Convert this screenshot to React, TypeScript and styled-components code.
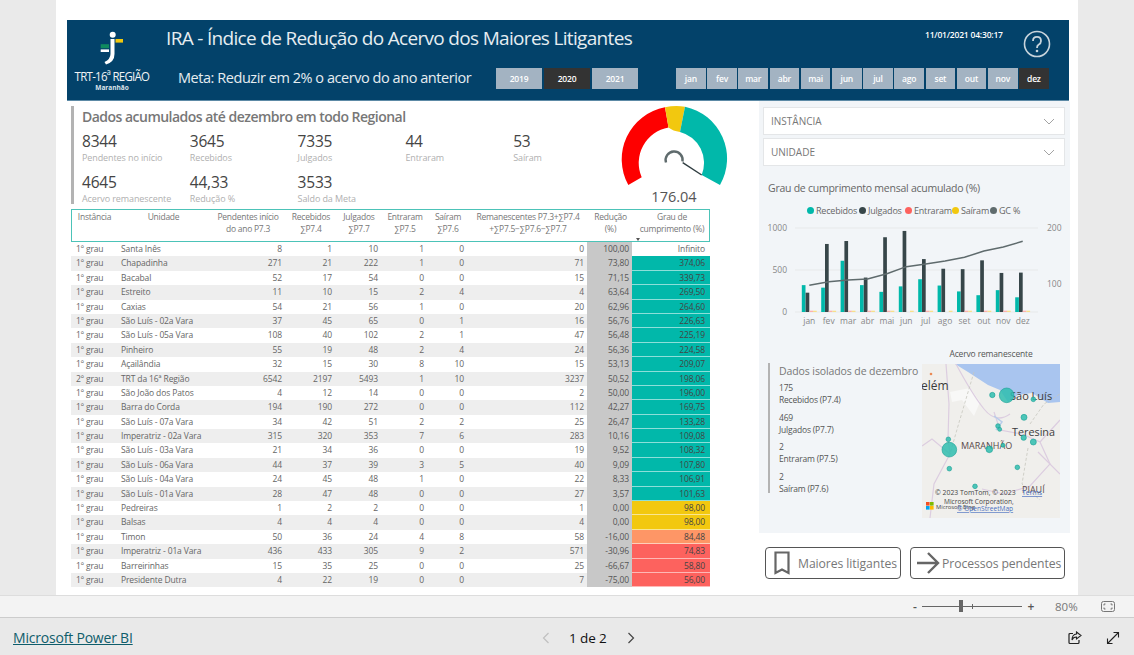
import React from "react";
import styled, { createGlobalStyle } from "styled-components";

const FONT = `"Open Sans", "Noto Sans", "Liberation Sans", sans-serif`;

const Global = createGlobalStyle`
  html, body { margin: 0; padding: 0; background: #eaeaea; font-family: ${FONT}; overflow: hidden; }
  * { box-sizing: border-box; }
`;

const Page = styled.div`
  width: 1134px; height: 655px; display: flex; flex-direction: column; background: #eaeaea;
`;
const Stage = styled.div`
  height: 595px; padding-left: 56px; display: flex; flex: none;
`;
const Canvas = styled.main`
  width: 1022px; background: #fff; padding: 20px 8px 0 11px; display: flex; flex-direction: column;
`;
const Banner = styled.header`
  width: 1002px; height: 81px; flex: none; background: #03426a; border-bottom: 1px solid #5d8aa6;
  display: flex; color: #fff;
`;
const LogoBox = styled.div`
  width: 99px; flex: none; display: flex; flex-direction: column; align-items: center; padding: 9px 9px 0 0;
`;
const LogoName = styled.div`
  font-size: 13.5px; line-height: 14px; letter-spacing: -0.85px; color: #f1f4f6; margin-top: 4px; white-space: nowrap; transform: scaleX(.85);
`;
const LogoSub = styled.div`
  font-size: 6.5px; line-height: 8px; font-weight: 700; color: #dde5ea; margin-top: 1px;
`;
const BannerMain = styled.div`
  flex: 1; display: flex; flex-direction: column; min-width: 0;
`;
const TitleRow = styled.div`
  height: 48px; display: flex; align-items: flex-start;
`;
const Title = styled.h1`
  margin: 6px 0 0; font-size: 19px; line-height: 25px; font-weight: 400; color: #e6edf1; width: 759px; white-space: nowrap; letter-spacing: -0.68px;
`;
const Stamp = styled.div`
  font-size: 8.5px; line-height: 12px; margin-top: 9px; width: 98px; color: #fff; font-weight: 600; white-space: nowrap; letter-spacing: -0.2px;
`;
const HelpIcon = styled.svg`
  width: 28px; height: 28px; margin-top: 10px; flex: none;
`;
const MetaRow = styled.div`
  display: flex; align-items: flex-start; height: 21px;
`;
const Meta = styled.div`
  width: 330px; padding-left: 12px; font-size: 14.5px; line-height: 20px; color: #e6edf1; white-space: nowrap; letter-spacing: -0.45px; flex: none;
`;
const Years = styled.div`
  display: flex; gap: 2px; width: 180px; flex: none;
`;
const Months = styled.div`
  display: flex; gap: 1.5px; flex: none;
`;
const Chip = styled.div<{ $on?: boolean; $w: number }>`
  width: ${(p) => p.$w}px; height: 21px; display: flex; align-items: center; justify-content: center;
  background: ${(p) => (p.$on ? "#333" : "#a3b3c2")}; color: #fff; font-size: 8.5px; font-weight: 600; letter-spacing: -0.2px;
`;

const Body = styled.div`
  display: flex; flex: 1; min-height: 0;
`;
const LeftCol = styled.div`
  width: 692px; flex: none; padding-left: 4px; display: flex; flex-direction: column;
`;
const TopRow = styled.div`
  height: 108px; display: flex; flex: none;
`;
const Summary = styled.section`
  width: 539px; height: 98px; margin-top: 5px; border-left: 3px solid #b3b3b3; padding-left: 8px; flex: none;
`;
const SummaryTitle = styled.h2`
  margin: 1px 0 0; font-size: 14px; line-height: 20px; font-weight: 600; color: #777; white-space: nowrap; letter-spacing: -0.52px;
`;
const KpiGrid = styled.div`
  display: grid; grid-template-columns: repeat(5, 107.8px); grid-auto-rows: 40.5px; margin-top: 4px;
`;
const Kpi = styled.div`
  display: flex; flex-direction: column;
`;
const KpiValue = styled.div`
  font-size: 15.5px; line-height: 21px; color: #444; letter-spacing: -0.2px;
`;
const KpiLabel = styled.div`
  font-size: 9px; line-height: 12px; color: #b0b0b0; white-space: nowrap; letter-spacing: -0.1px;
`;
const GaugeBox = styled.div`
  width: 130px; flex: none; display: flex; flex-direction: column; align-items: center; margin-top: -1px;
`;
const GaugeValue = styled.div`
  font-size: 14.5px; line-height: 18px; color: #555; margin-left: -2px;
`;

const Table = styled.div`
  width: 639px; flex: none;
`;
const COLS = "45px 93px 76px 50px 46px 46px 40px 120px 45px 78px";
const HeadRow = styled.div`
  display: grid; grid-template-columns: ${COLS}; height: 33px;
  border: 1px solid #4cc3b8; color: #777; font-size: 8.5px; line-height: 12px; text-align: center; letter-spacing: -0.25px;
`;
const HeadCell = styled.div`
  padding-top: 1px; position: relative; white-space: nowrap;
`;
const SortMark = styled.span`
  position: absolute; left: 3px; bottom: 0; width: 0; height: 0;
  border-left: 2.5px solid transparent; border-right: 2.5px solid transparent; border-top: 3px solid #555;
`;
const Row = styled.div<{ $alt: boolean }>`
  display: grid; grid-template-columns: ${COLS}; height: 14.4px; background: ${(p) => (p.$alt ? "#eee" : "#fff")};
  font-size: 8.5px; line-height: 14.4px; color: #666; letter-spacing: -0.12px;
`;
const Text = styled.div<{ $pad?: number }>`
  padding-left: ${(p) => p.$pad ?? 0}px; white-space: nowrap;
`;
const Num = styled.div`
  text-align: right; padding-right: 3px;
`;
const Reduc = styled(Num)`
  background: #c8c8c8; padding-right: 3px; color: #555;
`;
const Grade = styled(Num)<{ $bg: string; $fill: boolean }>`
  background: ${(p) => p.$bg}; padding-right: 5px; color: ${(p) => (p.$fill ? "#444" : "#666")};
  box-shadow: ${(p) => (p.$fill ? "inset 0 -1px 0 rgba(255,255,255,.55)" : "none")};
`;

const RightCol = styled.div`
  width: 311px; flex: none; display: flex; flex-direction: column;
`;
const Panel = styled.aside`
  height: 432px; background: #f2f5f8; padding: 6px 0 0 4px; flex: none;
`;
const Slicer = styled.div`
  width: 302px; height: 28px; background: #fff; border: 1px solid #e4e6e8; margin-bottom: 3px;
  display: flex; align-items: center; justify-content: space-between; padding: 0 9px 0 7px;
  font-size: 10px; color: #777;
`;
const ChartTitle = styled.div`
  margin: 15px 0 0 5px; font-size: 10.5px; line-height: 14px; color: #666; letter-spacing: -0.25px; white-space: nowrap;
`;
const Legend = styled.div`
  display: flex; margin: 9px 0 0 43.5px; height: 12px; align-items: center;
`;
const LegendItem = styled.div<{ $c: string; $w: number }>`
  width: ${(p) => p.$w}px; display: flex; align-items: center; gap: 2.5px; font-size: 9px; color: #666; flex: none; letter-spacing: -0.2px; white-space: nowrap;
  &::before { content: ""; width: 7px; height: 7px; border-radius: 50%; background: ${(p) => p.$c}; flex: none; }
`;
const Chart = styled.svg`
  display: block; width: 300px; height: 108px; margin: 6px 0 0 2px;
`;
const Lower = styled.div`
  display: flex; margin: 18px 0 0 5px;
`;
const Isolated = styled.section`
  width: 154px; height: 130px; margin-top: 15px; border-left: 2px solid #b3b3b3; padding: 1px 0 0 9px; flex: none;
`;
const IsoTitle = styled.div`
  font-size: 10.5px; line-height: 14px; color: #777; white-space: nowrap; letter-spacing: -0.1px; margin-bottom: 4px;
`;
const IsoItem = styled.div`
  height: 29.6px; font-size: 8.5px; line-height: 12px; color: #555; letter-spacing: -0.2px;
`;
const MapCol = styled.div`
  width: 138px; flex: none; display: flex; flex-direction: column;
`;
const MapTitle = styled.div`
  height: 16px; font-size: 8.5px; line-height: 12px; text-align: center; color: #555; white-space: nowrap; letter-spacing: -0.15px;
`;
const MapSvg = styled.svg`
  display: block; width: 138px; height: 154px;
`;
const Buttons = styled.div`
  display: flex; gap: 9px; padding: 14px 0 0 6px;
`;
const NavButton = styled.div<{ $w: number }>`
  width: ${(p) => p.$w}px; height: 32px; border: 1px solid #555; border-radius: 4px; background: #fff;
  display: flex; align-items: center; font-size: 12.2px; color: #777; white-space: nowrap; letter-spacing: -0.08px;
`;
const Status = styled.div`
  height: 23px; flex: none; background: #f3f3f3; border-top: 1px solid #ddd; border-bottom: 1px solid #ccc;
  display: flex; align-items: center; padding-left: 910px; color: #666;
`;
const ZoomSign = styled.span`
  font-size: 12px; width: 10px; text-align: center; color: #555; font-weight: 600;
`;
const Track = styled.div`
  width: 100px; height: 1px; background: #666; margin: 0 4px 0 2px; position: relative;
`;
const Thumb = styled.span`
  position: absolute; left: 37px; top: -6px; width: 4px; height: 12px; background: #666;
`;
const Tick = styled.span`
  position: absolute; left: 50px; top: -2px; width: 1px; height: 5px; background: #666;
`;
const ZoomValue = styled.span`
  font-size: 11.5px; margin-left: 19px; width: 46px; color: #777;
`;
const FitIcon = styled.svg`
  width: 14px; height: 11px;
`;
const Footer = styled.footer`
  height: 37px; flex: none; display: flex; align-items: center; background: #e9e9e9; padding: 3px 0 0 13px;
`;
const BiLink = styled.a`
  font-size: 14px; color: #0f5d6b; text-decoration: underline; width: 529px; letter-spacing: -0.2px; flex: none; white-space: nowrap; line-height: 18px;
`;
const Pager = styled.div`
  display: flex; align-items: center; width: 526px; flex: none; font-size: 13.5px; color: #111; letter-spacing: -0.1px;
`;
const PageLabel = styled.span`
  width: 37px; margin: 0 21px 0 19px; white-space: nowrap;
`;
const FootIcons = styled.div`
  display: flex; gap: 24px; align-items: center;
`;

type R = [string, string, number, number, number, number, number, number, string, string];
const rows: R[] = [
  ["1º grau", "Santa Inês", 8, 1, 10, 1, 0, 0, "100,00", "Infinito"],
  ["1º grau", "Chapadinha", 271, 21, 222, 1, 0, 71, "73,80", "374,06"],
  ["1º grau", "Bacabal", 52, 17, 54, 0, 0, 15, "71,15", "339,73"],
  ["1º grau", "Estreito", 11, 10, 15, 2, 4, 4, "63,64", "269,50"],
  ["1º grau", "Caxias", 54, 21, 56, 1, 0, 20, "62,96", "264,60"],
  ["1º grau", "São Luís - 02a Vara", 37, 45, 65, 0, 1, 16, "56,76", "226,63"],
  ["1º grau", "São Luís - 05a Vara", 108, 40, 102, 2, 1, 47, "56,48", "225,19"],
  ["1º grau", "Pinheiro", 55, 19, 48, 2, 4, 24, "56,36", "224,58"],
  ["1º grau", "Açailândia", 32, 15, 30, 8, 10, 15, "53,13", "209,07"],
  ["2º grau", "TRT da 16ª Região", 6542, 2197, 5493, 1, 10, 3237, "50,52", "198,06"],
  ["1º grau", "São João dos Patos", 4, 12, 14, 0, 0, 2, "50,00", "196,00"],
  ["1º grau", "Barra do Corda", 194, 190, 272, 0, 0, 112, "42,27", "169,75"],
  ["1º grau", "São Luís - 07a Vara", 34, 42, 51, 2, 2, 25, "26,47", "133,28"],
  ["1º grau", "Imperatriz - 02a Vara", 315, 320, 353, 7, 6, 283, "10,16", "109,08"],
  ["1º grau", "São Luís - 03a Vara", 21, 34, 36, 0, 0, 19, "9,52", "108,32"],
  ["1º grau", "São Luís - 06a Vara", 44, 37, 39, 3, 5, 40, "9,09", "107,80"],
  ["1º grau", "São Luís - 04a Vara", 24, 45, 48, 1, 0, 22, "8,33", "106,91"],
  ["1º grau", "São Luís - 01a Vara", 28, 47, 48, 0, 0, 27, "3,57", "101,63"],
  ["1º grau", "Pedreiras", 1, 2, 2, 0, 0, 1, "0,00", "98,00"],
  ["1º grau", "Balsas", 4, 4, 4, 0, 0, 4, "0,00", "98,00"],
  ["1º grau", "Timon", 50, 36, 24, 4, 8, 58, "-16,00", "84,48"],
  ["1º grau", "Imperatriz - 01a Vara", 436, 433, 305, 9, 2, 571, "-30,96", "74,83"],
  ["1º grau", "Barreirinhas", 15, 35, 25, 0, 0, 25, "-66,67", "58,80"],
  ["1º grau", "Presidente Dutra", 4, 22, 19, 0, 0, 7, "-75,00", "56,00"],
];
const gradeColor = (s: string) => {
  if (s === "Infinito") return "transparent";
  const v = parseFloat(s.replace(",", "."));
  if (v >= 100) return "#01b8aa";
  if (v >= 90) return "#f2c80f";
  if (v >= 80) return "#fe9666";
  return "#fd625e";
};

const months = ["jan", "fev", "mar", "abr", "mai", "jun", "jul", "ago", "set", "out", "nov", "dez"];
const rec = [320, 290, 610, 320, 240, 305, 390, 315, 245, 200, 260, 175];
const jul = [230, 810, 845, 410, 890, 965, 630, 515, 510, 615, 465, 469];
const lineY = [331, 320, 315, 312, 296, 275, 267, 258, 247, 228, 216, 199];

const kpis = [
  ["8344", "Pendentes no início"], ["3645", "Recebidos"], ["7335", "Julgados"], ["44", "Entraram"], ["53", "Saíram"],
  ["4645", "Acervo remanescente"], ["44,33", "Redução %"], ["3533", "Saldo da Meta"],
];
const bubbles = [
  [755, 151, 22], [712, 150, 8], [835, 163, 7], [807, 217, 9], [729, 243, 7], [734, 253, 6], [806, 278, 8],
  [835, 291, 9], [744, 301, 6], [703, 313, 10], [580, 283, 7], [583, 314, 22], [583, 371, 7], [787, 367, 7], [660, 424, 7],
];

const Gauge = () => (
  <svg width="130" height="88" viewBox="0 0 130 88" style={{ display: "block", flex: "none" }}>
    <path d="M18.3 85A53 53 0 0 1 55 7.3L58.5 27.5A36 36 0 0 0 31.7 77.3Z" fill="#fe0000" />
    <path d="M55 7.3A53 53 0 0 1 75 6.7L70 32Q63 31 58.5 27.5Z" fill="#f2c80f" />
    <path d="M75 6.7A53 53 0 0 1 110 85L91.7 75A32 32 0 0 0 70 32Z" fill="#01b8aa" />
    <path d="M56 62.5A8.5 8.5 0 1 1 72.5 61.5" fill="none" stroke="#5f6b6d" strokeWidth="2.4" />
    <path d="M72.7 62.7L91.7 75" stroke="#2f3d40" strokeWidth="1.4" />
  </svg>
);

const Logo = () => (
  <svg width="30" height="36" viewBox="0 0 30 36">
    <circle cx="15.7" cy="5.7" r="3" fill="#fff" />
    <rect x="18.5" y="10" width="7.5" height="3.6" fill="#f2c80f" />
    <rect x="3.7" y="15.2" width="8.3" height="4" fill="#0f8a5f" />
    <rect x="3.7" y="20.4" width="8.3" height="2.6" fill="#fff" />
    <path d="M13.5 10H17.5V25Q17.5 33 9 35.5L7.5 33Q13.5 30 13.5 25Z" fill="#fff" />
  </svg>
);

const BarChart = () => (
  <Chart viewBox="0 0 300 108">
    {[6, 48, 90].map((y) => (
      <line key={y} x1="30" x2="273" y1={y} y2={y} stroke="#e7e9ea" strokeWidth="1" />
    ))}
    {([["1000", 6], ["500", 48], ["0", 90]] as [string, number][]).map(([t, y]) => (
      <text key={t} x="22" y={y + 3} textAnchor="end" fontSize="8.5" fill="#888" fontFamily={FONT}>{t}</text>
    ))}
    {([["200", 6], ["100", 62]] as [string, number][]).map(([t, y]) => (
      <text key={t} x="282" y={y + 3} fontSize="8.5" fill="#888" fontFamily={FONT}>{t}</text>
    ))}
    {months.map((m, i) => {
      const c = 44.3 + 19.4 * i;
      return (
        <g key={m}>
          <rect x={c - 7.5} y={90 - rec[i] * 0.084} width="3.7" height={rec[i] * 0.084} fill="#01b8aa" />
          <rect x={c - 3.7} y={90 - jul[i] * 0.084} width="3.7" height={jul[i] * 0.084} fill="#374649" />
          {i !== 5 && i !== 7 && <rect x={c} y="88.7" width="3.7" height="1.3" fill="#fdb0ae" />}
          <rect x={c + 3.7} y="88.7" width="3.7" height="1.3" fill="#f8e08a" />
          <text x={c} y="101.5" textAnchor="middle" fontSize="8.5" fill="#888" fontFamily={FONT}>{m}</text>
        </g>
      );
    })}
    <polyline
      points={lineY.map((y, i) => `${44.3 + 19.4 * i},${y / 3 - 47}`).join(" ")}
      fill="none" stroke="#5f6b6d" strokeWidth="1.5"
    />
  </Chart>
);

const MapView = () => (
  <MapSvg viewBox="0 0 138 154">
    <rect width="138" height="154" fill="#f0efec" />
    <path d="M33 0L46 8L66 21L78 26L86 38L96 31L110 29L126 39L138 38V0Z" fill="#a9c5ef" />
    <path d="M28 28L48 24L58 38L52 52L40 36L30 38Z" fill="#f8f8f7" />
    <g fill="none" stroke="#dccde0" strokeWidth="1.2">
      <path d="M24 0L27 40L26 75L28 90L12 120L8 154" />
      <path d="M34 0Q50 30 62 45T88 50" />
      <path d="M72 48L78 66L100 70L118 78L128 100L108 122L82 130L60 125" />
      <path d="M118 78L138 56" />
      <path d="M28 90L10 75L0 82" />
      <path d="M116 88L138 110" />
    </g>
    <g fill="none" stroke="#c6c6be" strokeWidth=".8" strokeDasharray="3 2">
      <path d="M52 8L36 62L28 90" />
      <path d="M108 60L122 40L138 30" />
      <path d="M106 84L100 120L118 136" />
    </g>
    <path d="M72 52L80 58L74 66" fill="none" stroke="#b9cdea" strokeWidth="1.5" />
    <circle cx="9" cy="10" r="1.3" fill="#ea8a55" />
    <g fontFamily={FONT} fill="#3b3b3b">
      <text x="-1" y="26" fontSize="12">elém</text>
      <text x="88" y="36" fontSize="11">São Luís</text>
      <text x="90" y="72" fontSize="10.8">Teresina</text>
      <text x="39" y="85" fontSize="9" fill="#5a4a4a">MARANHÃO</text>
      <text x="100" y="129" fontSize="9" fill="#5a4a4a">PIAUÍ</text>
    </g>
    {bubbles.map(([x, y, r], i) => (
      <circle key={i} cx={(x - 501) / 3} cy={(y - 57) / 3} r={r / 3} fill="#2fbdaf" fillOpacity=".85" stroke="#18a093" strokeWidth=".6" />
    ))}
    <g fontFamily={FONT} fontSize="6.9" fill="#444">
      <text x="13" y="131">© 2023 TomTom, © 2023</text>
      <text x="22" y="139.5" fontSize="6.6">Microsoft Corporation,</text>
      <text x="14" y="144.5" fontSize="5.8">Microsoft Bing</text>
      <text x="35" y="147" fontSize="6.6" fill="#4a6fc0" textDecoration="underline">© OpenStreetMap</text>
      <text x="100" y="131" fill="#4a6fc0" textDecoration="underline">Terms</text>
    </g>
    <rect x="4" y="138" width="3.6" height="3.6" fill="#f25022" />
    <rect x="8" y="138" width="3.6" height="3.6" fill="#7fba00" />
    <rect x="4" y="142" width="3.6" height="3.6" fill="#00a4ef" />
    <rect x="8" y="142" width="3.6" height="3.6" fill="#ffb900" />
  </MapSvg>
);

const Chevron = () => (
  <svg width="12" height="7" viewBox="0 0 12 7">
    <path d="M1 1L6 6L11 1" fill="none" stroke="#999" strokeWidth=".9" />
  </svg>
);

export default function App() {
  return (
    <Page>
      <Global />
      <Stage>
        <Canvas>
          <Banner>
            <LogoBox>
              <Logo />
              <LogoName>TRT-16ª REGIÃO</LogoName>
              <LogoSub>Maranhão</LogoSub>
            </LogoBox>
            <BannerMain>
              <TitleRow>
                <Title>IRA - Índice de Redução do Acervo dos Maiores Litigantes</Title>
                <Stamp>11/01/2021 04:30:17</Stamp>
                <HelpIcon viewBox="0 0 28 28">
                  <circle cx="14" cy="14" r="12.5" fill="none" stroke="#c8d4dc" strokeWidth="1.6" />
                  <path d="M10 11Q10 6.8 14 6.8T18 11Q18 13.3 15.5 14.8Q14 15.8 14 18" fill="none" stroke="#c8d4dc" strokeWidth="1.8" />
                  <circle cx="14" cy="21" r="1.3" fill="#c8d4dc" />
                </HelpIcon>
              </TitleRow>
              <MetaRow>
                <Meta>Meta: Reduzir em 2% o acervo do ano anterior</Meta>
                <Years>
                  {["2019", "2020", "2021"].map((y) => (
                    <Chip key={y} $w={46} $on={y === "2020"}>{y}</Chip>
                  ))}
                </Years>
                <Months>
                  {months.map((m) => (
                    <Chip key={m} $w={29.7} $on={m === "dez"}>{m}</Chip>
                  ))}
                </Months>
              </MetaRow>
            </BannerMain>
          </Banner>
          <Body>
            <LeftCol>
              <TopRow>
                <Summary>
                  <SummaryTitle>Dados acumulados até dezembro em todo Regional</SummaryTitle>
                  <KpiGrid>
                    {kpis.map(([v, l]) => (
                      <Kpi key={l}>
                        <KpiValue>{v}</KpiValue>
                        <KpiLabel>{l}</KpiLabel>
                      </Kpi>
                    ))}
                  </KpiGrid>
                </Summary>
                <GaugeBox>
                  <Gauge />
                  <GaugeValue>176.04</GaugeValue>
                </GaugeBox>
              </TopRow>
              <Table>
                <HeadRow>
                  <HeadCell>Instância</HeadCell>
                  <HeadCell>Unidade</HeadCell>
                  <HeadCell>Pendentes início<br />do ano P7.3</HeadCell>
                  <HeadCell>Recebidos<br />∑P7.4</HeadCell>
                  <HeadCell>Julgados<br />∑P7.7</HeadCell>
                  <HeadCell>Entraram<br />∑P7.5</HeadCell>
                  <HeadCell>Saíram<br />∑P7.6</HeadCell>
                  <HeadCell>Remanescentes P7.3+∑P7.4<br />+∑P7.5−∑P7.6−∑P7.7</HeadCell>
                  <HeadCell>Redução<br />(%)</HeadCell>
                  <HeadCell>Grau de<br />cumprimento (%)<SortMark /></HeadCell>
                </HeadRow>
                {rows.map((r, i) => (
                  <Row key={r[1]} $alt={i % 2 === 1}>
                    <Text $pad={5}>{r[0]}</Text>
                    <Text $pad={5}>{r[1]}</Text>
                    <Num>{r[2]}</Num>
                    <Num>{r[3]}</Num>
                    <Num>{r[4]}</Num>
                    <Num>{r[5]}</Num>
                    <Num>{r[6]}</Num>
                    <Num>{r[7]}</Num>
                    <Reduc>{r[8]}</Reduc>
                    <Grade $bg={gradeColor(r[9])} $fill={r[9] !== "Infinito"}>{r[9]}</Grade>
                  </Row>
                ))}
              </Table>
            </LeftCol>
            <RightCol>
              <Panel>
                <Slicer>INSTÂNCIA<Chevron /></Slicer>
                <Slicer>UNIDADE<Chevron /></Slicer>
                <ChartTitle>Grau de cumprimento mensal acumulado (%)</ChartTitle>
                <Legend>
                  <LegendItem $c="#01b8aa" $w={52}>Recebidos</LegendItem>
                  <LegendItem $c="#374649" $w={46}>Julgados</LegendItem>
                  <LegendItem $c="#fd625e" $w={47}>Entraram</LegendItem>
                  <LegendItem $c="#f2c80f" $w={38}>Saíram</LegendItem>
                  <LegendItem $c="#5f6b6d" $w={40}>GC %</LegendItem>
                </Legend>
                <BarChart />
                <Lower>
                  <Isolated>
                    <IsoTitle>Dados isolados de dezembro</IsoTitle>
                    <IsoItem>175<br />Recebidos (P7.4)</IsoItem>
                    <IsoItem>469<br />Julgados (P7.7)</IsoItem>
                    <IsoItem>2<br />Entraram (P7.5)</IsoItem>
                    <IsoItem>2<br />Saíram (P7.6)</IsoItem>
                  </Isolated>
                  <MapCol>
                    <MapTitle>Acervo remanescente</MapTitle>
                    <MapView />
                  </MapCol>
                </Lower>
              </Panel>
              <Buttons>
                <NavButton $w={136}>
                  <svg width="32" height="28" viewBox="0 0 32 28" style={{ flex: "none" }}>
                    <path d="M9.5 3.5H22.5V24L16 20.5L9.5 24Z" fill="none" stroke="#666" strokeWidth="2.2" />
                  </svg>
                  Maiores litigantes
                </NavButton>
                <NavButton $w={155}>
                  <svg width="31" height="28" viewBox="0 0 31 28" style={{ flex: "none" }}>
                    <path d="M6 14H27M17 4L27 14L17 24" fill="none" stroke="#666" strokeWidth="2.4" />
                  </svg>
                  Processos pendentes
                </NavButton>
              </Buttons>
            </RightCol>
          </Body>
        </Canvas>
      </Stage>
      <Status>
        <ZoomSign>-</ZoomSign>
        <Track><Thumb /><Tick /></Track>
        <ZoomSign>+</ZoomSign>
        <ZoomValue>80%</ZoomValue>
        <FitIcon viewBox="0 0 14 11">
          <rect x=".5" y=".5" width="13" height="10" rx="2" fill="none" stroke="#777" />
          <path d="M3 4.5V3H4.5M9.5 3H11V4.5M11 6.5V8H9.5M4.5 8H3V6.5" fill="none" stroke="#555" strokeWidth=".8" />
        </FitIcon>
      </Status>
      <Footer>
        <BiLink>Microsoft Power BI</BiLink>
        <Pager>
          <svg width="8" height="12" viewBox="0 0 8 12"><path d="M6.5 1L1.5 6L6.5 11" fill="none" stroke="#c0c0c0" strokeWidth="1.2" /></svg>
          <PageLabel>1 de 2</PageLabel>
          <svg width="8" height="12" viewBox="0 0 8 12"><path d="M1.5 1L6.5 6L1.5 11" fill="none" stroke="#444" strokeWidth="1.2" /></svg>
        </Pager>
        <FootIcons>
          <svg width="14" height="14" viewBox="0 0 14 14">
            <path d="M5 2.5H2Q1 2.5 1 3.5V11.5Q1 12.5 2 12.5H10Q11 12.5 11 11.5V9" fill="none" stroke="#222" strokeWidth="1.2" />
            <path d="M8.5 1L13 4.5L8.5 8V6Q5 6 4 9Q4 3.5 8.5 3Z" fill="none" stroke="#222" strokeWidth="1.1" />
          </svg>
          <svg width="14" height="14" viewBox="0 0 14 14">
            <path d="M1.5 12.5L12.5 1.5M7.5 1.5H12.5V6.5M1.5 7.5V12.5H6.5" fill="none" stroke="#222" strokeWidth="1.1" />
          </svg>
        </FootIcons>
      </Footer>
    </Page>
  );
}
